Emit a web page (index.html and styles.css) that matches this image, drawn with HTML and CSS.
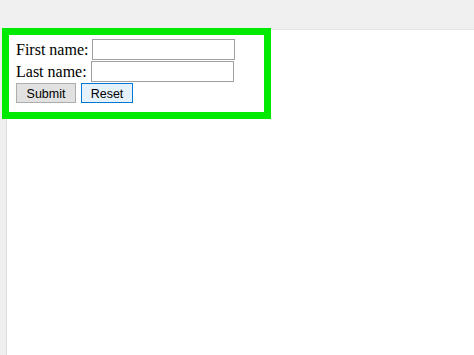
FILE: index.html
```html
<!DOCTYPE html>
<html>
<head>
<meta charset="utf-8">
<link rel="stylesheet" href="styles.css">
</head>
<body>
<div class="toolbar"></div>
<div class="page">
  <form class="frame">
    <div class="row"><span class="label">First name:</span><input class="field field-first" type="text"></div>
    <div class="row"><span class="label">Last name:</span><input class="field" type="text"></div>
    <div class="row buttons">
      <button type="button" class="btn">Submit</button>
      <button type="button" class="btn btn-focus">Reset</button>
    </div>
  </form>
</div>
</body>
</html>
```
FILE: styles.css
```css
html, body {
  margin: 0;
  padding: 0;
}
body {
  width: 474px;
  height: 355px;
  overflow: hidden;
  background: linear-gradient(to right, #efefef 0, #efefef 6px, #dedede 6px, #dedede 7px, #ffffff 7px);
  font-family: "Liberation Serif", "Times New Roman", serif;
  font-size: 16px;
  color: #000;
}
.toolbar {
  height: 29px;
  background: #f0f0f0;
  border-bottom: 1px solid #e4e4e4;
}
.page {
  padding-left: 2px;
}
.frame {
  margin: -2px 0 0 0;
  width: 248px;
  height: 73px;
  border: 7px solid #00ea00;
  background: #fff;
  padding: 4px 0 0 7px;
  box-sizing: content-box;
  display: flex;
  flex-direction: column;
}
.row {
  display: flex;
  align-items: center;
  height: 21px;
  margin-bottom: 1px;
}
.label {
  line-height: 18px;
  margin-right: 4px;
  margin-top: 1px;
}
.field {
  width: 143px;
  height: 21px;
  box-sizing: border-box;
  border: 1px solid #a0a0a0;
  background: #fff;
  margin: 0;
  padding: 0;
}
.buttons {
  margin-top: 0;
  height: 20px;
  gap: 5px;
}
.btn {
  font-family: "Liberation Sans", Arial, sans-serif;
  font-size: 12.5px;
  height: 20px;
  padding: 1px 0 0;
  margin: 0;
  background: #e1e1e1;
  border: 1px solid #adadad;
  color: #000;
  width: 60px;
}
.btn-focus {
  width: 52px;
  background: #e5f1fb;
  border-color: #0078d7;
}
```
